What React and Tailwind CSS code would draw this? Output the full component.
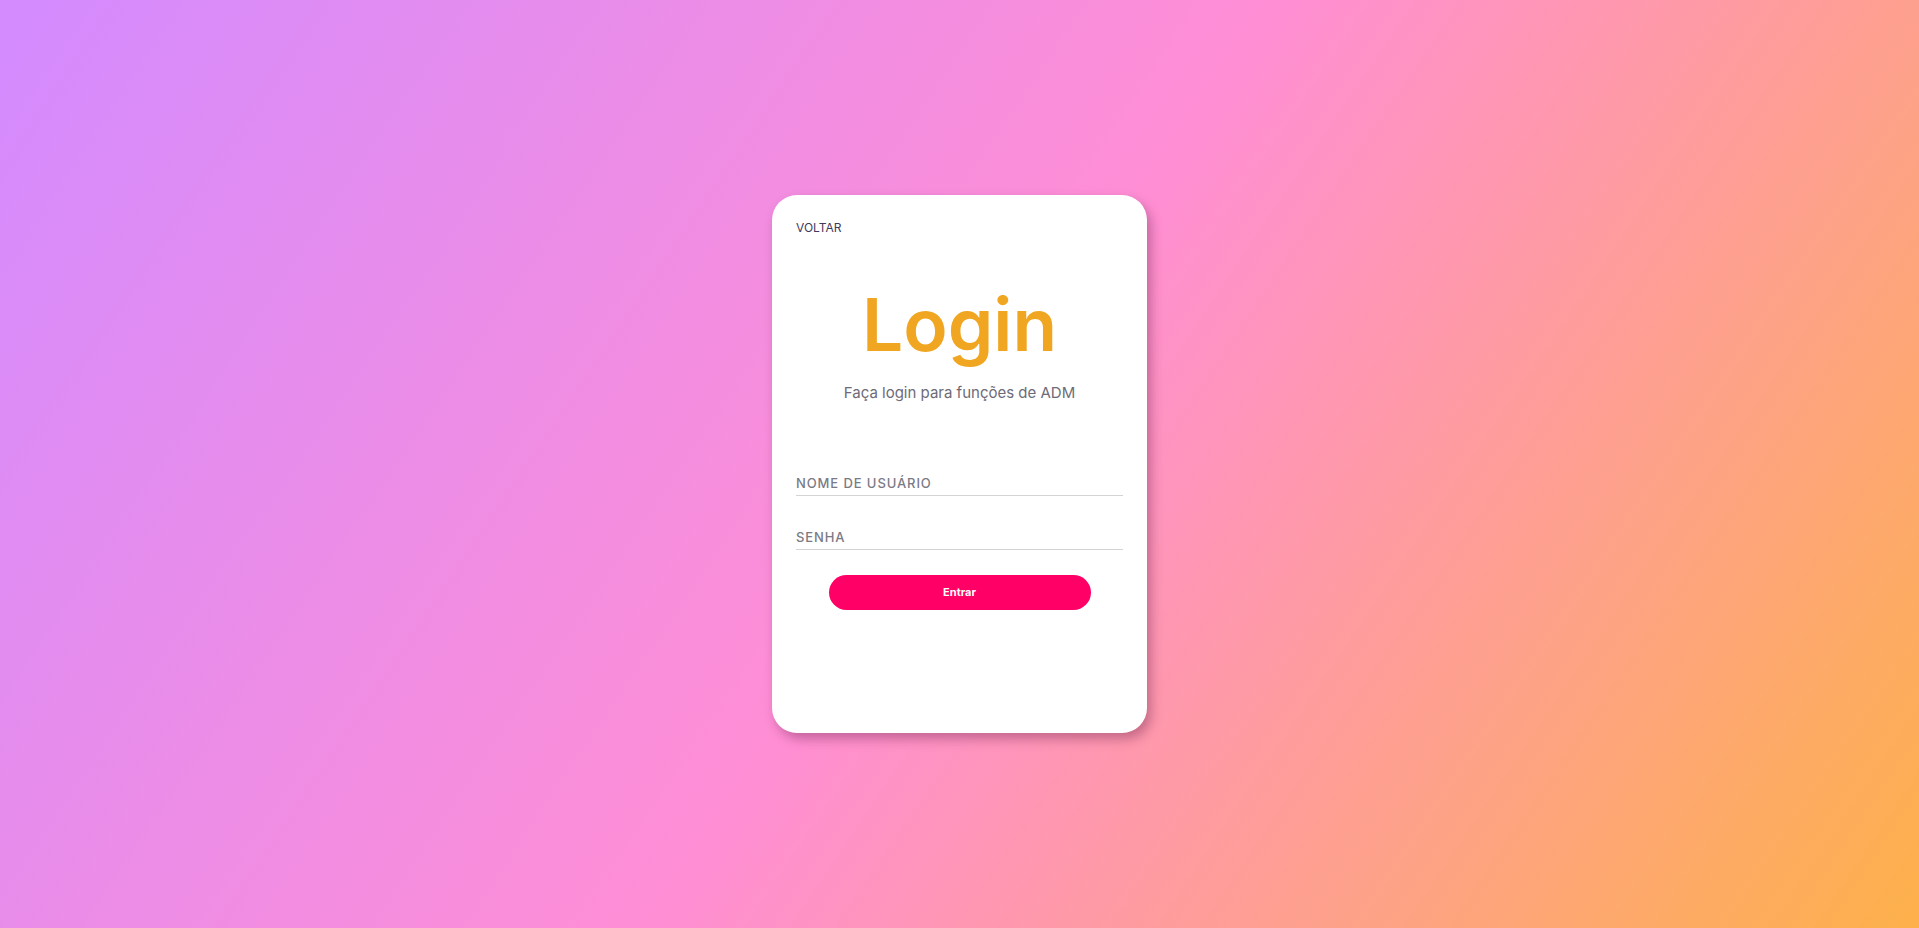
export default function App() {
  return (
    <div
      className="flex h-screen w-full items-center justify-center bg-[linear-gradient(124deg,#d38bff_0%,#ff8ed5_50%,#fdb14a_100%)]"
      style={{ fontFamily: "Inter, 'Noto Sans', sans-serif" }}
    >
      <div className="flex h-[538px] w-[375px] flex-col rounded-[25px] bg-white px-6 pt-6 shadow-[4px_6px_12px_rgba(90,20,60,0.35)]">
        <a className="text-[12px] leading-[18px] text-[#3f3a5e]">VOLTAR</a>
        <h1 className="mt-[52px] text-center text-[73px] font-semibold leading-[72px] tracking-[0px] text-[#f0a620]">
          Login
        </h1>
        <p className="mt-[21px] text-center text-[15px] leading-[22px] text-[#6d6b78]">
          Faça login para funções de ADM
        </p>
        <div className="mt-[70px] flex flex-col gap-[32px]">
          <input
            className="w-full border-b border-[#d4d4d4] bg-transparent pb-[3px] text-[13px] font-medium leading-[18px] tracking-[0.9px] outline-none placeholder:text-[#7a7a86]"
            placeholder="NOME DE USUÁRIO"
          />
          <input
            type="password"
            className="w-full border-b border-[#d4d4d4] bg-transparent pb-[3px] text-[13px] font-medium leading-[18px] tracking-[0.9px] outline-none placeholder:text-[#7a7a86]"
            placeholder="SENHA"
          />
        </div>
        <button className="mx-auto mt-[25px] h-[35px] w-[262px] rounded-full bg-[#ff0066] text-[11px] font-bold text-white">
          Entrar
        </button>
      </div>
    </div>
  );
}
